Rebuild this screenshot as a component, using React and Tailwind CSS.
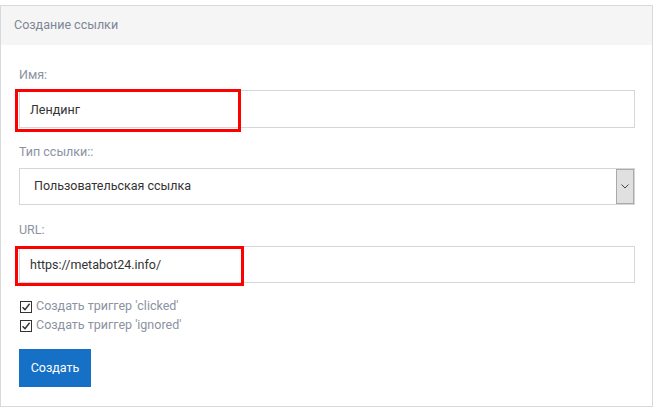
import React, { useState } from 'react';

const Check = ({ checked, onChange, label }) => (
  <label className="flex items-center h-[19px] cursor-pointer">
    <span
      onClick={onChange}
      className="w-[12px] h-[12px] border border-[#333] bg-white flex items-center justify-center mr-[4px] ml-[1px]"
    >
      {checked && (
        <svg width="10" height="10" viewBox="0 0 10 10">
          <path d="M1.5 5.2 L4 7.6 L8.6 1.8" fill="none" stroke="#333" strokeWidth="1.4" />
        </svg>
      )}
    </span>
    <span className="text-[12.5px] text-[#8b92a1]">{label}</span>
  </label>
);

const App = () => {
  const [name, setName] = useState('Лендинг');
  const [type, setType] = useState('custom');
  const [url, setUrl] = useState('https://metabot24.info/');
  const [clicked, setClicked] = useState(true);
  const [ignored, setIgnored] = useState(true);

  return (
    <div className="pt-[5px] bg-white min-h-[408px]" style={{ fontFamily: 'Roboto, "Liberation Sans", sans-serif' }}>
      <div className="w-[653px] border border-[#d6d9de] bg-white">
        {/* Заголовок */}
        <div className="h-[39px] bg-[#f5f5f5] flex items-center pl-[13px] text-[12.5px] text-[#7d8595]">
          Создание ссылки
        </div>

        <div className="pl-[18px] pr-[17px] pt-[21px] pb-[19px]">
          <div className="text-[12.5px] leading-[18px] text-[#8b92a1]">Имя:</div>
          <div className="relative mt-[6px]">
            <input
              value={name}
              onChange={e => setName(e.target.value)}
              className="w-full h-[38px] border border-[#d3d6db] px-[10px] text-[12.5px] text-[#333] outline-none"
            />
            <div className="absolute left-[-4px] top-[-1px] w-[226px] h-[43px] border-[3px] border-[#ff0000] pointer-events-none" />
          </div>

          <div className="text-[12.5px] leading-[18px] text-[#8b92a1] mt-[15px]">Тип ссылки::</div>
          <div className="relative mt-[7px] h-[37px] border border-[#d3d6db] flex items-center">
            <select
              value={type}
              onChange={e => setType(e.target.value)}
              className="appearance-none w-full h-full pl-[14px] text-[12.5px] text-[#333] bg-transparent outline-none"
            >
              <option value="custom">Пользовательская ссылка</option>
            </select>
            <div className="absolute right-0 top-0 bottom-0 w-[18px] bg-[#e0e0e0] border border-[#aaaaaa] flex items-center justify-center pointer-events-none">
              <svg width="8" height="5" viewBox="0 0 8 5">
                <path d="M0.5 0.5 L4 4 L7.5 0.5" fill="none" stroke="#444" strokeWidth="1" />
              </svg>
            </div>
          </div>

          <div className="text-[12.5px] leading-[18px] text-[#8b92a1] mt-[16px]">URL:</div>
          <div className="relative mt-[7px]">
            <input
              value={url}
              onChange={e => setUrl(e.target.value)}
              className="w-full h-[37px] border border-[#d3d6db] px-[10px] text-[12.5px] text-[#333] outline-none"
            />
            <div className="absolute left-[-4px] top-0 w-[229px] h-[40px] border-[3px] border-[#ff0000] pointer-events-none" />
          </div>

          <div className="mt-[14px]">
            <Check checked={clicked} onChange={() => setClicked(!clicked)} label="Создать триггер 'clicked'" />
            <Check checked={ignored} onChange={() => setIgnored(!ignored)} label="Создать триггер 'ignored'" />
          </div>

          <button className="mt-[14px] w-[72px] h-[38px] bg-[#1670c6] text-white text-[12.5px]">
            Создать
          </button>
        </div>
      </div>
    </div>
  );
};

export default App;
